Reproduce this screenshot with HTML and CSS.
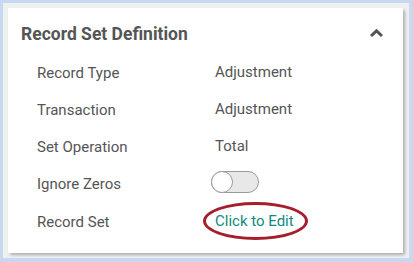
FILE: index.html
```html
<!DOCTYPE html>
<html lang="en">
<head>
    <meta charset="UTF-8">
    <title>Record Set Definition</title>
    <link rel="stylesheet" href="styles.css">
</head>
<body>
    <div class="frame">
        <div class="card">
            <div class="card-header">
                <div class="card-title">Record Set Definition</div>
                <svg class="chevron" width="15" height="10" viewBox="0 0 15 10">
                    <polyline points="2,8 7.5,2.8 13,8" fill="none" stroke="#555" stroke-width="3"/>
                </svg>
            </div>
            <div class="fields">
                <div class="field">
                    <div class="field-label">Record Type</div>
                    <div class="field-value">Adjustment</div>
                </div>
                <div class="field">
                    <div class="field-label">Transaction</div>
                    <div class="field-value">Adjustment</div>
                </div>
                <div class="field">
                    <div class="field-label">Set Operation</div>
                    <div class="field-value">Total</div>
                </div>
                <div class="field">
                    <div class="field-label">Ignore Zeros</div>
                    <div class="field-value">
                        <span class="toggle"><span class="toggle-knob"></span></span>
                    </div>
                </div>
                <div class="field">
                    <div class="field-label">Record Set</div>
                    <div class="field-value">
                        <span class="edit-link">Click to Edit</span>
                    </div>
                </div>
            </div>
        </div>
    </div>
</body>
</html>
```

FILE: styles.css
```css
html, body {
    margin: 0;
    padding: 0;
    width: 413px;
    height: 262px;
    background: #c6d9f1;
    font-family: Roboto, 'Liberation Sans', Arial, sans-serif;
    color: #555;
}
body {
    padding: 3px 4px 4px 3px;
    box-sizing: border-box;
}
.frame {
    background: #f0f0f0;
    height: 100%;
    padding: 5px 6px 5px 5px;
    box-sizing: border-box;
}
.card {
    background: #fff;
    height: 245px;
    box-shadow: 2px 2px 3px rgba(0,0,0,0.28);
    padding: 0 20px 0 13px;
    box-sizing: border-box;
}
.card-header {
    display: flex;
    align-items: center;
    justify-content: space-between;
    padding: 15px 0 9px 0;
    height: 22px;
}
.card-title {
    font-size: 17.5px;
    font-weight: 700;
    line-height: 22px;
    color: #555;
}
.chevron {
    display: block;
    margin-top: -3px;
    margin-right: -1px;
}
.fields {
    padding-left: 16px;
}
.field {
    display: flex;
    align-items: center;
    height: 37.25px;
    font-size: 15px;
}
.field-label {
    width: 178px;
    flex-shrink: 0;
}
.field-value {
    margin-top: -2px;
    display: flex;
    align-items: center;
}
.toggle {
    display: block;
    width: 46px;
    height: 20px;
    margin-left: -4px;
    margin-top: -3px;
    border: 1px solid #9a9a9a;
    border-radius: 11px;
    background: #e8e8e8;
    position: relative;
}
.toggle-knob {
    position: absolute;
    left: -1px;
    top: -1px;
    width: 20px;
    height: 20px;
    border: 1px solid #9a9a9a;
    border-radius: 50%;
    background: #fff;
}
.edit-link {
    color: #138a7e;
    position: relative;
}
.edit-link::after {
    content: "";
    position: absolute;
    left: -12px;
    right: -14px;
    top: -10px;
    bottom: -10px;
    border: 3.5px solid #a51e2c;
    border-radius: 50%;
}
```
